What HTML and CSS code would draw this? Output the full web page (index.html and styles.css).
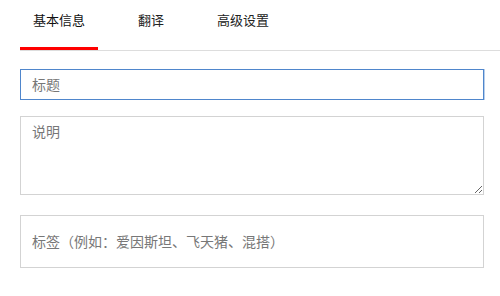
FILE: index.html
```html
<!DOCTYPE html>
<html lang="zh">
<head>
<meta charset="utf-8">
<link rel="stylesheet" href="styles.css">
</head>
<body>
<div class="page">
  <div class="tabs">
    <div class="tab active">基本信息</div>
    <div class="tab">翻译</div>
    <div class="tab">高级设置</div>
  </div>
  <div class="form">
    <input class="field title-field focused" type="text" placeholder="标题">
    <textarea class="field desc-field" placeholder="说明"></textarea>
    <input class="field tags-field" type="text" placeholder="标签（例如：爱因斯坦、飞天猪、混搭）">
  </div>
</div>
</body>
</html>
```
FILE: styles.css
```css
html, body {
  margin: 0;
  padding: 0;
  background: #fff;
}
body {
  font-family: "Noto Sans CJK SC", "Noto Sans", sans-serif;
  color: #222;
}
.page {
  padding-left: 20px;
}
.tabs {
  display: flex;
  gap: 27px;
  border-bottom: 1px solid #ddd;
}
.tab {
  font-size: 13px;
  line-height: 18px;
  padding: 11px 13px 18px;
  border-bottom: 3px solid transparent;
  color: #222;
}
.tab.active {
  border-bottom-color: #f00;
  color: #111;
}
.form {
  display: flex;
  flex-direction: column;
  padding: 18px 16px 0 0;
}
.field {
  box-sizing: border-box;
  width: 100%;
  border: 1px solid #d3d3d3;
  background: #fff;
  font-family: "Noto Sans CJK SC", "Noto Sans", sans-serif;
  font-size: 14px;
  color: #333;
  margin: 0;
  outline: none;
  border-radius: 0;
}
.field::placeholder {
  color: #777;
}
.title-field {
  height: 31px;
  padding: 0 11px 1px;
}
.focused {
  border-color: #4f86cc;
  box-shadow: 1px 0 0 rgba(79, 134, 204, 0.4);
}
.desc-field {
  margin-top: 16px;
  height: 79px;
  padding: 4px 11px;
  line-height: 20px;
  resize: vertical;
  display: block;
}
.tags-field {
  margin-top: 20px;
  height: 53px;
  padding: 0 11px 1px;
}
```
